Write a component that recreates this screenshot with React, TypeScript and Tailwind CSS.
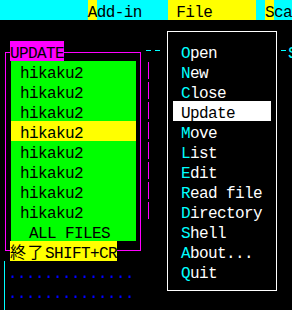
import React from 'react';

const ROW = 'h-5 leading-[26px] whitespace-pre';

const files = ['hikaku2', 'hikaku2', 'hikaku2', 'hikaku2', 'hikaku2', 'hikaku2', 'hikaku2', 'hikaku2'];
const fileSel = 3;

const menu = ['Open', 'New', 'Close', 'Update', 'Move', 'List', 'Edit', 'Read file', 'Directory', 'Shell', 'About...', 'Quit'];
const menuSel = 3;

function TopBar() {
  return (
    <div className={`flex bg-[#00ffff] text-black ${ROW}`}>
      <div className="w-[90px]" />
      <span className="w-[9px] bg-[#ffff00]">A</span>
      <span>dd-in</span>
      <div className="w-[27px]" />
      <div className="w-[90px] bg-[#ffff00] pl-[8px]">File</div>
      <div className="w-[9px]" />
      <span className="w-[9px] bg-[#ffff00]">S</span>
      <span>ca</span>
    </div>
  );
}

function UpdateWindow() {
  return (
    <div className="absolute left-[5px] top-[41px] w-[136px] h-[220px]">
      <div className="absolute left-0 right-0 top-[11px] bottom-[10px] border border-[#ff00ff]" />
      <div className="relative flex flex-col items-start pl-[5px]">
        <div className={`bg-[#ff00ff] text-black ${ROW}`}>UPDATE</div>
        <div className="ml-[1px] w-[125px] bg-[#00ff00] text-black">
          {files.map((f, i) => (
            <div key={i} className={`${ROW} pl-[9px] ${i === fileSel ? 'bg-[#ffff00]' : ''}`}>
              {f}
            </div>
          ))}
          <div className={`${ROW} pl-[18px]`}>ALL FILES</div>
        </div>
        <div className={`bg-[#ffff00] text-black ${ROW}`}>
          <span className="tracking-[1.5px]">終了</span>SHIFT+CR
        </div>
      </div>
    </div>
  );
}

function FileMenu() {
  return (
    <div className="absolute left-[167px] top-[31px] w-[110px] h-[260px] border border-white pt-[9px] pl-[5px]">
      {menu.map((m, i) => (
        <div
          key={m}
          className={`${ROW} w-[98px] pl-[8px] ${i === menuSel ? 'bg-white text-black' : 'text-white'}`}
        >
          {i === menuSel ? (
            m
          ) : (
            <>
              <span className="text-[#00ffff]">{m[0]}</span>
              {m.slice(1)}
            </>
          )}
        </div>
      ))}
    </div>
  );
}

export default function App() {
  return (
    <div className="relative w-[292px] h-[310px] overflow-hidden bg-black font-['Liberation_Mono','Noto_Sans_CJK_JP',monospace] text-[16px] tracking-[-0.6px]">
      <TopBar />

      {/* window behind: title dashes and left edge */}
      <div className="absolute left-[146px] top-[50px] flex gap-[4px]">
        <div className="w-[5px] h-px bg-[#00ffff]" />
        <div className="w-[5px] h-px bg-[#00ffff]" />
      </div>
      <div className="absolute left-[281px] top-[50px] w-[5px] h-px bg-[#00ffff]" />
      <div className={`absolute left-[288px] top-[41px] text-[#00ffff] ${ROW}`}>S</div>
      <div className="absolute left-[148px] top-[62px] flex flex-col gap-[3px]">
        {Array.from({ length: 8 }).map((_, i) => (
          <div key={i} className="w-px h-[17px] bg-[#ff00ff]" />
        ))}
      </div>

      {/* lower window */}
      <div className="absolute left-[4px] top-[261px] w-px h-[49px] bg-[#00ffff]" />
      <div className="absolute left-[8px] top-[261px] text-[#0000ff]">
        <div className={ROW}>..............</div>
        <div className={ROW}>..............</div>
      </div>

      <UpdateWindow />
      <FileMenu />
    </div>
  );
}
